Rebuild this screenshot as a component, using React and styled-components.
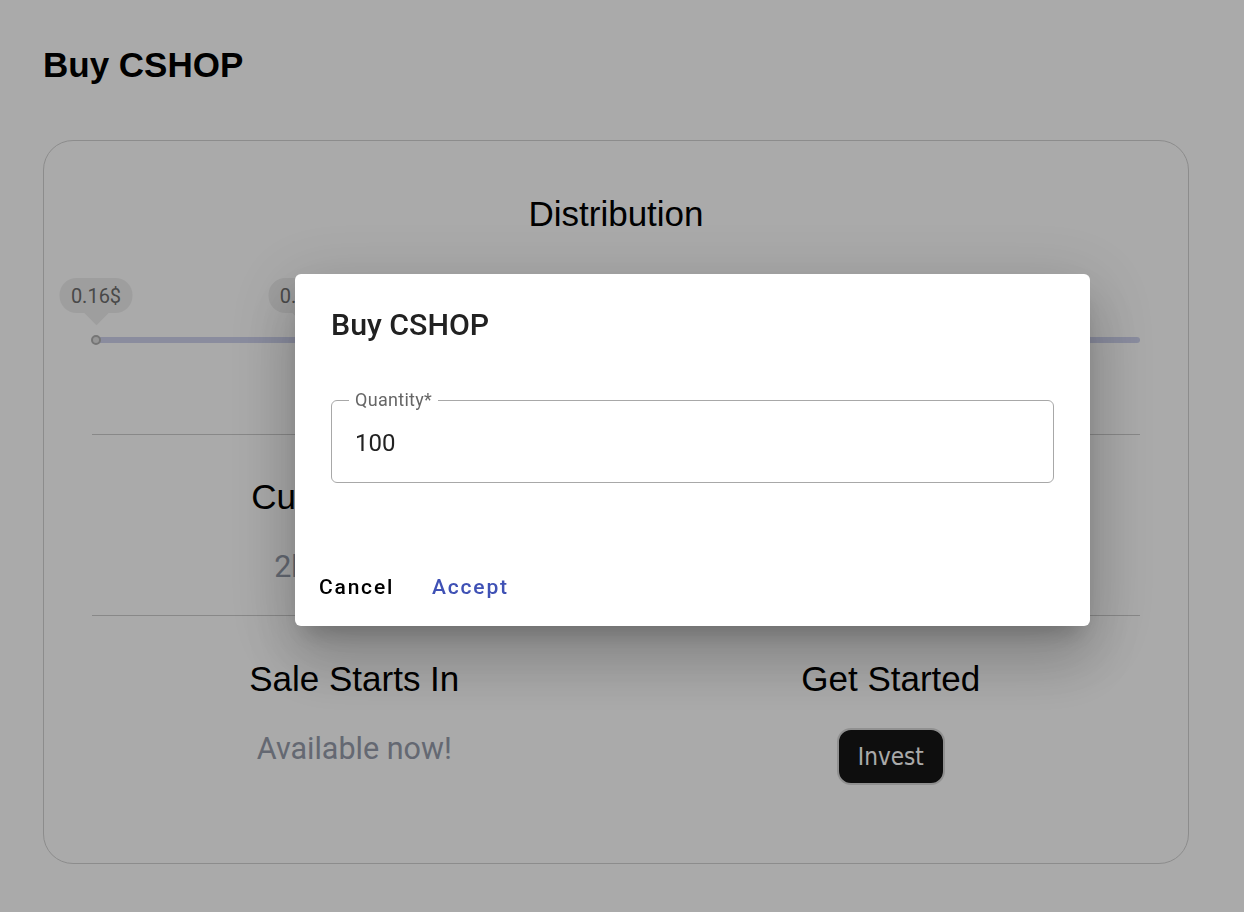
import React from "react";
import styled, { createGlobalStyle } from "styled-components";

const Global = createGlobalStyle`
  html, body { margin: 0; padding: 0; background: #ffffff; }
  body { font-family: "Liberation Sans", Arial, sans-serif; }
  * { box-sizing: border-box; }
`;

const Page = styled.div`
  padding: 45px 55px 48px 43px;
`;

const PageTitle = styled.h1`
  margin: 0;
  font-family: "Liberation Sans", Arial, sans-serif;
  font-weight: 700;
  font-size: 35px;
  line-height: 40px;
  color: #000;
`;

const Card = styled.section`
  margin-top: 55px;
  width: 1146px;
  border: 1px solid #d3d3d3;
  border-radius: 30px;
  padding: 53px 48px 0 48px;
`;

const SectionHeading = styled.h3`
  margin: 0;
  font-family: "Liberation Sans", Arial, sans-serif;
  font-weight: 400;
  font-size: 35px;
  line-height: 40px;
  color: #000;
  text-align: center;
`;

const SliderArea = styled.div`
  position: relative;
  height: 156px;
  margin: 44px 0 0 4px;
`;

const Track = styled.div`
  position: absolute;
  left: 0;
  right: 0;
  top: 59px;
  height: 6px;
  border-radius: 3px;
  background: #cfd3ee;
`;

const Thumb = styled.div`
  position: absolute;
  top: 62px;
  width: 10px;
  height: 10px;
  border-radius: 50%;
  background: #e2e2e2;
  border: 2px solid #b0b0b0;
  transform: translate(-50%, -50%);
`;

const Bubble = styled.div`
  position: absolute;
  top: 0;
  width: 73px;
  height: 35px;
  border-radius: 17px;
  background: #eeeeee;
  transform: translateX(-50%);
  display: flex;
  align-items: center;
  justify-content: center;
  font-family: Roboto, "Noto Sans", sans-serif;
  font-size: 20px;
  color: #6e6e6e;

  &::before {
    content: "";
    position: absolute;
    left: 50%;
    top: 23px;
    width: 20px;
    height: 20px;
    background: #eeeeee;
    transform: translateX(-50%) rotate(45deg);
  }
`;

const BubbleText = styled.span`
  position: relative;
`;

const Divider = styled.hr`
  margin: 0;
  border: none;
  height: 1px;
  background: #cccccc;
`;

const InfoRow = styled.div`
  display: grid;
  grid-template-columns: 1fr 1fr;
  margin: 0 -19px 0 -6px;
  padding: ${(p) => p.$pad};
`;

const InfoCell = styled.div`
  display: flex;
  flex-direction: column;
  align-items: center;
`;

const InfoValue = styled.div`
  margin-top: 32px;
  font-family: Roboto, "Noto Sans", sans-serif;
  font-size: 30.5px;
  line-height: 35px;
  color: #969dab;
  text-align: center;
`;

const InvestButton = styled.button`
  margin-top: 29px;
  width: 108px;
  height: 57px;
  border: 2px solid #d9d9d9;
  border-radius: 14px;
  background: #151515;
  color: #ffffff;
  font-family: "DejaVu Sans Condensed", "DejaVu Sans", sans-serif;
  font-size: 24px;
  cursor: pointer;
  padding: 0;
`;

const Backdrop = styled.div`
  position: fixed;
  inset: 0;
  z-index: 10;
  background: rgba(0, 0, 0, 0.335);
  display: flex;
  align-items: flex-start;
  justify-content: flex-start;
  padding: 274px 0 0 295px;
`;

const Dialog = styled.div`
  width: 795px;
  background: #ffffff;
  border-radius: 6px;
  box-shadow: 0px 16px 22px -10px rgba(0, 0, 0, 0.2),
    0px 36px 57px 4px rgba(0, 0, 0, 0.14),
    0px 14px 69px 12px rgba(0, 0, 0, 0.12);
  display: flex;
  flex-direction: column;
`;

const DialogTitle = styled.h2`
  margin: 0;
  padding: 27px 36px 21px;
  font-family: Roboto, "Noto Sans", sans-serif;
  font-weight: 500;
  font-size: 30.3px;
  line-height: 48px;
  color: #212121;
`;

const DialogContent = styled.div`
  padding: 0 36px 65px;
`;

const Field = styled.fieldset`
  margin: 21px 0 0;
  padding: 0 20px 25px 17px;
  border: 1px solid #a8a8a8;
  border-radius: 6px;
`;

const Legend = styled.legend`
  padding: 0 6px;
  font-family: Roboto, "Noto Sans", sans-serif;
  font-size: 18px;
  line-height: 18px;
  color: #666666;
  letter-spacing: 0.3px;
`;

const Input = styled.input`
  display: block;
  width: 100%;
  margin-top: 20px;
  padding: 0 0 0 6px;
  border: none;
  outline: none;
  background: transparent;
  font-family: Roboto, "Noto Sans", sans-serif;
  font-size: 24px;
  line-height: 28px;
  height: 28px;
  color: #222222;
`;

const DialogActions = styled.div`
  display: flex;
  align-items: center;
  gap: 14px;
  padding: 12px;
`;

const TextButton = styled.button`
  height: 54px;
  padding: 0 12px;
  border: none;
  background: transparent;
  font-family: Roboto, "Noto Sans", sans-serif;
  font-weight: 500;
  font-size: 21px;
  letter-spacing: 1.8px;
  color: ${(p) => p.$color};
  cursor: pointer;
`;

const marks = [
  { pct: 0, label: "0.16$" },
  { pct: 20, label: "0.20$" },
  { pct: 40, label: "0.24$" },
  { pct: 60, label: "0.28$" },
  { pct: 80, label: "0.32$" },
];

export default function App() {
  return (
    <>
      <Global />
      <Page>
        <PageTitle>Buy CSHOP</PageTitle>
        <Card>
          <SectionHeading>Distribution</SectionHeading>
          <SliderArea>
            <Track />
            {marks.map((m) => (
              <Bubble key={m.label} style={{ left: `${m.pct}%` }}>
                <BubbleText>{m.label}</BubbleText>
              </Bubble>
            ))}
            <Thumb style={{ left: "0%" }} />
          </SliderArea>
          <Divider />
          <InfoRow $pad="42px 0 31px">
            <InfoCell>
              <SectionHeading>Current Price</SectionHeading>
              <InfoValue>2h 14m 05s</InfoValue>
            </InfoCell>
            <InfoCell>
              <SectionHeading>Total Supply</SectionHeading>
              <InfoValue>100,000,000</InfoValue>
            </InfoCell>
          </InfoRow>
          <Divider />
          <InfoRow $pad="43px 0 78px">
            <InfoCell>
              <SectionHeading>Sale Starts In</SectionHeading>
              <InfoValue>Available now!</InfoValue>
            </InfoCell>
            <InfoCell>
              <SectionHeading>Get Started</SectionHeading>
              <InvestButton>Invest</InvestButton>
            </InfoCell>
          </InfoRow>
        </Card>
      </Page>
      <Backdrop>
        <Dialog role="dialog">
          <DialogTitle>Buy CSHOP</DialogTitle>
          <DialogContent>
            <Field>
              <Legend>Quantity*</Legend>
              <Input defaultValue="100" />
            </Field>
          </DialogContent>
          <DialogActions>
            <TextButton $color="#000000">Cancel</TextButton>
            <TextButton $color="#3f51b5">Accept</TextButton>
          </DialogActions>
        </Dialog>
      </Backdrop>
    </>
  );
}
